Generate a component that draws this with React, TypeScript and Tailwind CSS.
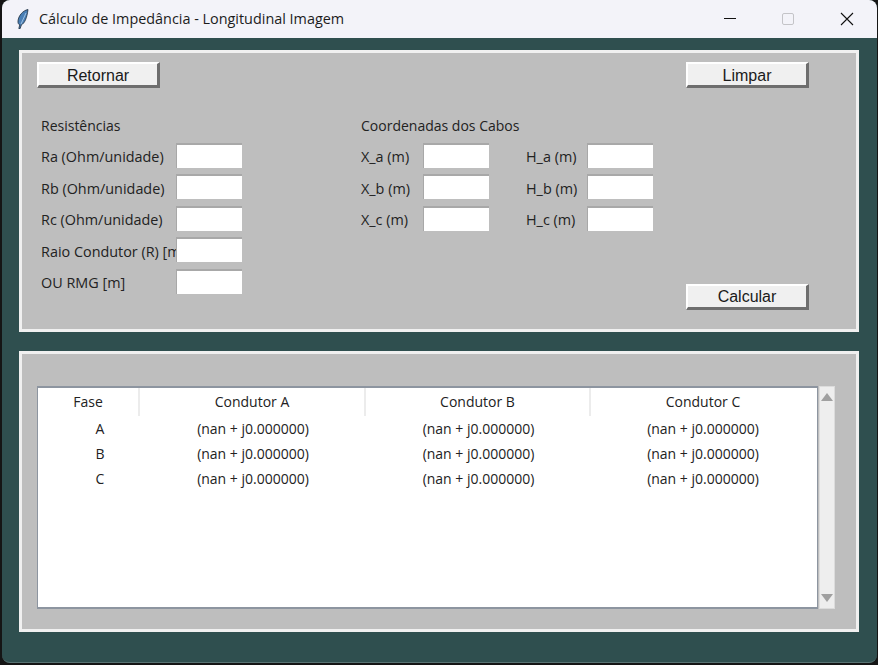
const font = "[font-family:'Open_Sans','Noto_Sans',sans-serif]";

function TkButton({ label }: { label: string }) {
  return (
    <div className="flex h-[26px] w-[123px] items-center justify-center border-t-[2px] border-l-[2px] border-r-[3px] border-b-[3px] border-t-white border-l-white border-r-[#6e6e6e] border-b-[#6e6e6e] bg-[#f0f0f0] pt-[2px] font-['Liberation_Sans',sans-serif] text-[16px] text-[#1a1a1a]">
      {label}
    </div>
  );
}

function Entry() {
  return <div className="h-[25px] w-[66px] shrink-0 border-t-2 border-l border-t-[#a8a8a8] border-l-[#a8a8a8] bg-white" />;
}

function Field({ label, width }: { label: string; width: string }) {
  return (
    <div className="flex h-[25px] items-center">
      <div className={`${width} overflow-hidden whitespace-nowrap pt-[4px] text-[14.4px] leading-[20px]`}>{label}</div>
      <Entry />
    </div>
  );
}

const rows = ["A", "B", "C"];

export default function App() {
  return (
    <div className="h-[665px] w-[878px] overflow-hidden bg-[#151515]">
      <div className={`ml-[2px] flex h-[663px] w-[875px] flex-col overflow-hidden rounded-b-lg rounded-t-lg border-b border-b-[#587272] bg-[#2f4f4f] text-[14px] leading-none text-[#222222] ${font}`}>
        <div className="flex h-[38px] w-[876px] shrink-0 items-center bg-[#f3f3f9] pl-[15px]">
          <svg width="12" height="20" viewBox="0 0 12 20" className="mr-[10px]">
            <path d="M11 0.500C6 1.500 1.500 6.500 1 12C0.800 14 1.500 15.500 2.800 15.800L1.800 19.500L3.200 19.500L4.400 15.800C7.500 14.500 10 9 11 0.500Z" fill="#4a7fb5" stroke="#1c2c3c" strokeWidth="0.8" />
            <path d="M9 4L4 15" stroke="#b4d2ee" strokeWidth="0.8" />
          </svg>
          <span className="whitespace-nowrap text-[14.4px] text-[#1c1c1c]">Cálculo de Impedância - Longitudinal Imagem</span>
          <div className="ml-auto flex items-center">
            <svg width="14" height="14" viewBox="0 0 14 14" className="mr-[45px]"><path d="M1 6.500H13" stroke="#111" strokeWidth="1" /></svg>
            <div className="mr-[46px] h-[12px] w-[12px] rounded-[2px] border border-[#c4c4c8]" />
            <svg width="14" height="14" viewBox="0 0 14 14" className="mr-[24px]"><path d="M1 1L13 13M13 1L1 13" stroke="#111" strokeWidth="1.100" /></svg>
          </div>
        </div>

        <div className="flex flex-col gap-[19px] pl-[17px] pt-[12px]">
          <div className="flex h-[282px] w-[840px] flex-col border-[3px] border-[#f0f0f0] bg-[#bebebe] px-[15px] pt-[9px]">
            <div className="flex justify-between pr-[32px]">
              <TkButton label="Retornar" />
              <TkButton label="Limpar" />
            </div>
            <div className="mt-[28px] flex">
              <div className="flex w-[324px] flex-col gap-[6.500px] pl-[4px]">
                <div className="flex h-[20px] items-center">Resistências</div>
                <Field label="Ra (Ohm/unidade)" width="w-[135px]" />
                <Field label="Rb (Ohm/unidade)" width="w-[135px]" />
                <Field label="Rc (Ohm/unidade)" width="w-[135px]" />
                <Field label="Raio Condutor (R) [m]" width="w-[135px]" />
                <Field label="OU RMG [m]" width="w-[135px]" />
              </div>
              <div className="flex flex-col gap-[6.500px]">
                <div className="flex h-[20px] items-center">Coordenadas dos Cabos</div>
                <div className="flex flex-col gap-[6.500px]">
                  {[["X_a (m)", "H_a (m)"], ["X_b (m)", "H_b (m)"], ["X_c (m)", "H_c (m)"]].map(([x, h]) => (
                    <div key={x} className="flex gap-[37px]">
                      <Field label={x} width="w-[62px]" />
                      <Field label={h} width="w-[61px]" />
                    </div>
                  ))}
                </div>
              </div>
              <div className="ml-auto flex flex-col justify-end pr-[32px]">
                <div className="mb-[-16px]">
                  <TkButton label="Calcular" />
                </div>
              </div>
            </div>
          </div>

          <div className="flex h-[281px] w-[840px] items-start border-[3px] border-[#f0f0f0] bg-[#bebebe] pl-[15px] pt-[32px]">
            <div className="h-[223px] w-[781px] border-t-2 border-l border-b-2 border-r border-[#8d95a0] bg-white leading-[20px]">
              <div className="flex h-[28px] items-start">
                <div className="h-[28px] w-[102px] border-r-2 border-[#ececec] pt-[4px] text-center">Fase</div>
                <div className="h-[28px] w-[226px] border-r-2 border-[#ececec] pt-[4px] text-center">Condutor A</div>
                <div className="h-[28px] w-[225px] border-r-2 border-[#ececec] pt-[4px] text-center">Condutor B</div>
                <div className="h-[28px] w-[224px] pt-[4px] text-center">Condutor C</div>
              </div>
              {rows.map((r) => (
                <div key={r} className="flex h-[25px] items-center">
                  <div className="w-[102px] pl-[22px] text-center">{r}</div>
                  <div className="w-[226px] text-center">(nan + j0.000000)</div>
                  <div className="w-[225px] text-center">(nan + j0.000000)</div>
                  <div className="w-[224px] text-center">(nan + j0.000000)</div>
                </div>
              ))}
            </div>
            <div className="ml-px flex h-[223px] w-[16px] flex-col items-center justify-between border border-[#dcdcdc] bg-[#eeeeee] py-[6px]">
              <svg width="12" height="8" viewBox="0 0 12 8"><path d="M6 0L12 8H0Z" fill="#a0a0a0" /></svg>
              <svg width="12" height="8" viewBox="0 0 12 8"><path d="M0 0H12L6 8Z" fill="#a0a0a0" /></svg>
            </div>
          </div>
        </div>
      </div>
    </div>
  );
}
